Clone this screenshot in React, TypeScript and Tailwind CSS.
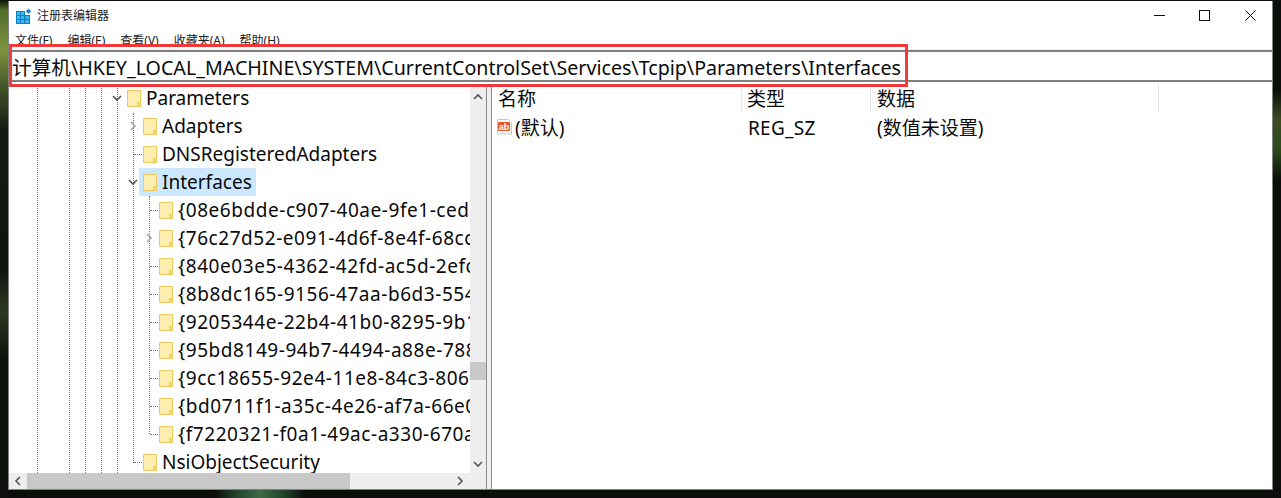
import React from "react";

const FONT = "font-['Noto_Sans','Noto_Sans_CJK_SC',sans-serif]";

function Folder() {
  return (
    <svg width="14" height="17" viewBox="0 0 14 17" className="shrink-0">
      <path d="M.5.5h13v16H.5z" fill="#fdeeb0" stroke="#eec95e" />
      <path d="M10.5 16.5V12.5H13.5V16.5z" fill="#f6d774" stroke="#eec95e" />
    </svg>
  );
}

function Chevron({ open }: { open: boolean }) {
  return (
    <svg width="10" height="10" viewBox="0 0 10 10" fill="none" stroke={open ? "#555" : "#a6a6a6"} strokeWidth="1.6">
      {open ? <path d="M1 3l4 4 4-4" /> : <path d="M3 1l4 4-4 4" />}
    </svg>
  );
}

type Row = { t: string; d: number; c?: "o" | "c"; sel?: boolean };
const rows: Row[] = [
  { t: "Parameters", d: 0, c: "o" },
  { t: "Adapters", d: 1, c: "c" },
  { t: "DNSRegisteredAdapters", d: 1 },
  { t: "Interfaces", d: 1, c: "o", sel: true },
  { t: "{08e6bdde-c907-40ae-9fe1-cedc", d: 2 },
  { t: "{76c27d52-e091-4d6f-8e4f-68cc", d: 2, c: "c" },
  { t: "{840e03e5-4362-42fd-ac5d-2efc", d: 2 },
  { t: "{8b8dc165-9156-47aa-b6d3-5541", d: 2 },
  { t: "{9205344e-22b4-41b0-8295-9b1f", d: 2 },
  { t: "{95bd8149-94b7-4494-a88e-7886", d: 2 },
  { t: "{9cc18655-92e4-11e8-84c3-806e", d: 2 },
  { t: "{bd0711f1-a35c-4e26-af7a-66e0", d: 2 },
  { t: "{f7220321-f0a1-49ac-a330-670a", d: 2 },
  { t: "NsiObjectSecurity", d: 1 },
];

const ml = ["ml-[103px]", "ml-[119px]", "ml-[135px]"];

function TreeRow({ r }: { r: Row }) {
  return (
    <div className={`relative h-7 flex items-center shrink-0 whitespace-nowrap ${ml[r.d]}`}>
      {r.c ? (
        <span className="w-[10px] shrink-0 mr-px flex items-center justify-center">
          <Chevron open={r.c === "o"} />
        </span>
      ) : (
        <span className="ml-[6px] w-[8px] shrink-0 mr-[-3px] h-px border-t border-dotted border-[#777]" />
      )}
      <span className={`shrink-0 pl-[4px] pr-[4px] h-7 flex items-center text-[19px] text-[#0a0a0a] ${r.sel ? "bg-[#cce8ff]" : ""}`}>
        <Folder />
        <span className={`ml-[5px] ${r.d === 2 ? "tracking-[0.55px]" : ""}`}>{r.t}</span>
      </span>
    </div>
  );
}

const guideClass = "absolute top-0 bottom-0 border-l border-dotted border-[#777]";

export default function App() {
  return (
    <div className={`relative w-[1281px] h-[498px] overflow-hidden pt-px pl-2 pr-2 pb-[8px] bg-[#0c0e0c] bg-[linear-gradient(90deg,transparent_8px,#0c0e0c_8px),linear-gradient(180deg,#0e120a_0px,#4f6c28_10px,#7f9440_50px,#46582a_85px,#141a12_130px,#10140f_270px,#2c3a22_310px,#0e110d_360px)] ${FONT}`}>
      <div className="absolute left-[215px] bottom-0 w-[90px] h-[9px] bg-[linear-gradient(90deg,transparent,#24472e,#3d6a45,#24472e,transparent)]" />
      <div className="absolute right-0 top-[90px] w-[8px] h-[90px] bg-[linear-gradient(180deg,transparent,#3d4a22,#2b4a1e,transparent)]" />
      <div className="relative h-full border border-[#7f8080] border-t-0 bg-white flex flex-col">
        {/* Title bar */}
        <div className="h-[29px] flex items-center shrink-0 pl-[7px]">
          <svg width="16" height="16" viewBox="0 0 16 16" className="shrink-0">
            <path d="M0 3h14v13H0z" fill="#0f7fc8" />
            <path d="M1 4h3v3H1zM5 4h3v3H5zM1 8h3v3H1zM5 8h3v3H5zM9.500 8h3.500v3H9.500zM1 12h3v3H1zM5 12h3v3H5zM9.500 12h3.500v3H9.500z" fill="#3db8f0" />
            <path d="M9 3h5v4H9z" fill="#fff" />
            <path d="M12.500 .5l2.800 2.800-2.800 2.800-2.800-2.800z" fill="#1a8ad4" />
          </svg>
          <span className="ml-[5px] text-[12px] text-[#222]">注册表编辑器</span>
          <div className="ml-auto flex items-center pr-[16px]">
            <svg width="11" height="11" viewBox="0 0 11 11" className="mr-[34px]"><path d="M0 5.500h11" stroke="#111" strokeWidth="1" /></svg>
            <svg width="11" height="11" viewBox="0 0 11 11" className="mr-[35px]"><rect x=".5" y=".5" width="10" height="10" fill="none" stroke="#111" /></svg>
            <svg width="11" height="11" viewBox="0 0 11 11"><path d="M.5.5l10 10M10.500.5l-10 10" stroke="#111" /></svg>
          </div>
        </div>
        {/* Menu */}
        <div className="h-[20px] shrink-0 flex pl-[6px] gap-[15px] text-[12px] text-[#222] leading-[21px] overflow-hidden border-b border-[#f0f0f0]">
          <span>文件(F)</span><span>编辑(E)</span><span>查看(V)</span><span>收藏夹(A)</span><span>帮助(H)</span>
        </div>
        {/* Address */}
        <div className="h-[32px] shrink-0 border-y-2 border-[#808080] flex items-center pl-[3px] pt-[3px] text-[19.65px] text-[#0a0a0a] whitespace-nowrap">
          计算机\HKEY_LOCAL_MACHINE\SYSTEM\CurrentControlSet\Services\Tcpip\Parameters\Interfaces
        </div>
        {/* Panes */}
        <div className="flex-1 min-h-0 flex pt-[2px]">
          {/* Tree */}
          <div className="w-[477px] shrink-0 flex flex-col">
            <div className="flex-1 min-h-0 flex">
              <div className="relative flex-1 min-w-0 overflow-hidden flex flex-col">
                <span className={`${guideClass} left-[28px]`} />
                <span className={`${guideClass} left-[60px]`} />
                <span className={`${guideClass} left-[76px]`} />
                <span className={`${guideClass} left-[92px]`} />
                <span className={`${guideClass} left-[108px]`} />
                <span className="absolute left-[124px] top-[29px] h-[350px] border-l border-dotted border-[#777]" />
                <span className="absolute left-[140px] top-[112px] h-[238px] border-l border-dotted border-[#777]" />
                {rows.map((r) => (
                  <TreeRow key={r.t} r={r} />
                ))}
              </div>
              <div className="w-[16px] shrink-0 bg-[#eeeeee] flex flex-col items-center">
                <svg width="10" height="10" viewBox="0 0 10 10" fill="none" stroke="#555" strokeWidth="1.6" className="mt-[8px]"><path d="M1 7l4-4 4 4" /></svg>
                <div className="mt-[260px] w-full h-[18px] bg-[#c8c8c8]" />
                <svg width="10" height="10" viewBox="0 0 10 10" fill="none" stroke="#555" strokeWidth="1.6" className="mt-auto mb-[4px]"><path d="M1 3l4 4 4-4" /></svg>
              </div>
            </div>
            <div className="h-[16px] shrink-0 bg-[#eeeeee] flex items-center">
              <svg width="10" height="10" viewBox="0 0 10 10" fill="none" stroke="#555" strokeWidth="1.6" className="ml-[4px] shrink-0"><path d="M7 1L3 5l4 4" /></svg>
              <div className="ml-[4px] w-[323px] h-full bg-[#c8c8c8]" />
              <svg width="10" height="10" viewBox="0 0 10 10" fill="none" stroke="#555" strokeWidth="1.6" className="ml-[105px] shrink-0"><path d="M3 1l4 4-4 4" /></svg>
            </div>
          </div>
          {/* Splitter */}
          <div className="w-[6px] shrink-0 bg-[#f0f0f0] border-x border-[#8a8a8a]" />
          {/* List */}
          <div className="flex-1 min-w-0 text-[19px] text-[#0a0a0a]">
            <div className="h-7 flex items-center">
              <div className="w-[250px] h-full pl-[6px] pt-[2px] flex items-center border-r border-[#e5e5e5]">名称</div>
              <div className="w-[129px] h-full pl-[5px] pt-[2px] flex items-center border-r border-[#e5e5e5]">类型</div>
              <div className="w-[288px] h-full pl-[6px] pt-[2px] flex items-center border-r border-[#e5e5e5]">数据</div>
            </div>
            <div className="h-7 mt-[2px] flex items-center">
              <div className="w-[250px] pl-[5px] flex items-center">
                <svg width="16" height="16" viewBox="0 0 16 16" className="shrink-0 -mt-[2px]">
                  <path d="M.5.5h11l3 3v12l-3-1.500-3 1.500-3-1.500-3 1.500-2-1z" fill="#fff" stroke="#c4c4c4" />
                  <rect x="1" y="3" width="12" height="9" fill="#e2572b" rx="1" />
                  <text x="7" y="10.500" fontSize="9" fontWeight="700" textAnchor="middle" fill="#fff" fontFamily="Liberation Sans, sans-serif">ab</text>
                </svg>
                <span className="ml-[2px]">(默认)</span>
              </div>
              <div className="w-[129px] pl-[6px] tracking-[0.3px]">REG_SZ</div>
              <div className="pl-[6px]">(数值未设置)</div>
            </div>
          </div>
        </div>
      </div>
      {/* red annotation */}
      <div className="absolute left-[9px] top-[44px] w-[899px] h-[43px] border-[3px] border-[#f23a3a] pointer-events-none" />
    </div>
  );
}
